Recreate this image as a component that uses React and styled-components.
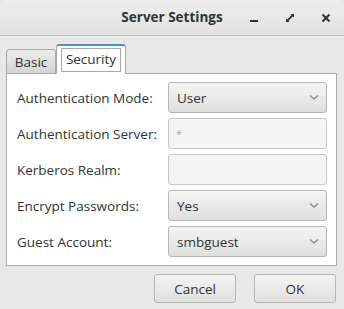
import styled, { createGlobalStyle } from 'styled-components'

const GlobalStyle = createGlobalStyle`
  * { box-sizing: border-box; }
  html, body {
    margin: 0;
    padding: 0;
    background: #e8e8e7;
  }
  body {
    font-family: "Open Sans", "DejaVu Sans", sans-serif;
    font-size: 13px;
    color: #2e3436;
  }
`

const Window = styled.div`
  width: 344px;
  height: 309px;
  background: #e8e8e7;
  border-radius: 6px 6px 0 0;
  overflow: hidden;
  display: flex;
  flex-direction: column;
`

const TitleBar = styled.div`
  height: 36px;
  flex-shrink: 0;
  border-bottom: 1px solid #bdbdba;
  background: linear-gradient(#ededec, #e2e2e0);
  display: flex;
  align-items: center;
  position: relative;
`

const Title = styled.div`
  position: absolute;
  left: 0;
  right: 0;
  text-align: center;
  font-weight: bold;
  font-size: 13.5px;
  color: #2e3436;
  top: 8px;
`

const WinButtons = styled.div`
  margin-left: auto;
  display: flex;
  align-items: center;
  position: relative;
`

const WinButton = styled.div`
  width: 36px;
  height: 34px;
  display: flex;
  align-items: center;
  justify-content: center;
  color: #2e3436;
`

const Body = styled.div`
  padding: 7px 7px 0 6px;
  display: flex;
  flex-direction: column;
`

const Tabs = styled.div`
  display: flex;
  align-items: flex-end;
  height: 30px;
  position: relative;
  z-index: 1;
`

const Tab = styled.div`
  height: ${p => (p.$active ? '30px' : '25px')};
  width: ${p => p.$width}px;
  border: 1px solid #a8a8a5;
  border-bottom: ${p => (p.$active ? '1px solid #fff' : '1px solid #a8a8a5')};
  border-top: ${p => (p.$active ? '2px solid #4a90d9' : '1px solid #a8a8a5')};
  border-radius: 3px 3px 0 0;
  background: ${p => (p.$active ? '#ffffff' : 'linear-gradient(#ececeb, #d4d4d2)')};
  margin-bottom: -1px;
  display: flex;
  align-items: center;
  justify-content: center;
  color: #2e3436;
  font-size: 13.5px;
  padding-top: 1px;
`

const Focus = styled.div`
  border: 1px solid #a8a8a5;
  padding: 1px 4px 2px;
  line-height: 19px;
  background: #fff;
`

const Frame = styled.div`
  border: 1px solid #a8a8a5;
  background: #fff;
  padding: 8px 9px 8px 10px;
  display: grid;
  grid-template-columns: 151px 1fr;
  row-gap: 5px;
  align-items: center;
`

const Label = styled.div`
  font-size: 13.5px;
  color: #2e3436;
  padding-top: 1px;
`

const Combo = styled.div`
  height: 31px;
  border: 1px solid #b6b6b3;
  border-radius: 3px;
  background: linear-gradient(#f5f5f4, #dfdfdd);
  display: flex;
  align-items: center;
  padding: 0 7px 0 8px;
  font-size: 13.5px;
  color: #2e3436;
  justify-content: space-between;
`

const Entry = styled.div`
  height: 31px;
  border: 1px solid #c8c8c5;
  border-radius: 3px;
  background: #f4f4f3;
  display: flex;
  align-items: center;
  padding: 0 7px;
  color: #a4a4a1;
  font-size: 11px;
`

const Footer = styled.div`
  display: flex;
  justify-content: flex-end;
  gap: 18px;
  padding: 8px 1px 0 0;
`

const Button = styled.div`
  width: 82px;
  height: 29px;
  border: 1px solid #b6b6b3;
  border-radius: 3px;
  background: linear-gradient(#f4f4f3, #e0e0de);
  display: flex;
  align-items: center;
  justify-content: center;
  font-size: 13.5px;
  color: #2e3436;
`

const Chevron = () => (
  <svg width="10" height="7" viewBox="0 0 10 7">
    <path d="M1 1.5 L5 5 L9 1.5" fill="none" stroke="#8e8e8b" strokeWidth="1.6" />
  </svg>
)

function App() {
  return (
    <>
      <GlobalStyle />
      <Window>
        <TitleBar>
          <Title>Server Settings</Title>
          <WinButtons>
            <WinButton>
              <svg width="10" height="10" viewBox="0 0 10 10">
                <rect x="1" y="7" width="8" height="2" fill="#2e3436" />
              </svg>
            </WinButton>
            <WinButton>
              <svg width="10" height="10" viewBox="0 0 10 10">
                <path d="M5.5 1 H9 V4.5 Z" fill="#2e3436" />
                <path d="M1 5.5 V9 H4.5 Z" fill="#2e3436" />
                <path d="M8 2 L2 8" stroke="#2e3436" strokeWidth="1.8" />
              </svg>
            </WinButton>
            <WinButton>
              <svg width="10" height="10" viewBox="0 0 10 10">
                <path d="M1.5 1.5 L8.5 8.5 M8.5 1.5 L1.5 8.5" stroke="#2e3436" strokeWidth="2" />
              </svg>
            </WinButton>
          </WinButtons>
        </TitleBar>
        <Body>
          <Tabs>
            <Tab $width={50}>Basic</Tab>
            <Tab $width={70} $active>
              <Focus>Security</Focus>
            </Tab>
          </Tabs>
          <Frame>
            <Label>Authentication Mode:</Label>
            <Combo>User<Chevron /></Combo>
            <Label>Authentication Server:</Label>
            <Entry>*</Entry>
            <Label>Kerberos Realm:</Label>
            <Entry />
            <Label>Encrypt Passwords:</Label>
            <Combo>Yes<Chevron /></Combo>
            <Label>Guest Account:</Label>
            <Combo>smbguest<Chevron /></Combo>
          </Frame>
          <Footer>
            <Button>Cancel</Button>
            <Button>OK</Button>
          </Footer>
        </Body>
      </Window>
    </>
  )
}

export default App
